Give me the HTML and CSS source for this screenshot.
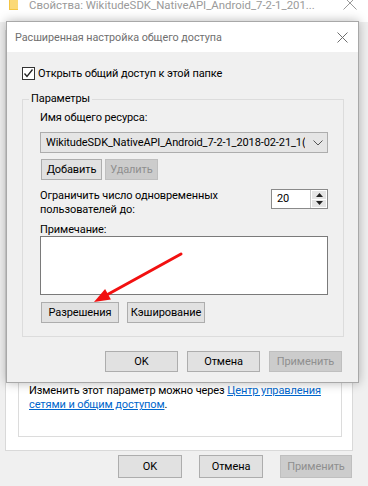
FILE: index.html
```html
<!DOCTYPE html>
<html lang="ru">
<head>
<meta charset="utf-8">
<title>Расширенная настройка общего доступа</title>
<link rel="stylesheet" href="styles.css">
</head>
<body>
<div class="win">
  <div class="wtitle">
    <svg class="folder" width="9" height="12" viewBox="0 0 9 12"><rect x="0" y="0" width="9" height="11" fill="#f5c542"/><rect x="1" y="0" width="8" height="10" fill="#fbd977"/></svg>
    <span class="wtitle-text">Свойства: WikitudeSDK_NativeAPI_Android_7-2-1_201...</span>
    <svg class="wclose" width="14" height="14" viewBox="0 0 14 14"><path d="M0.5 0.5L13.5 13.5M13.5 0.5L0.5 13.5" stroke="#9a9a9a" stroke-width="1" fill="none"/></svg>
  </div>
  <div class="tabpage">
    <div class="infobox">
      <p class="info">Изменить этот параметр можно через <a href="#">Центр управления<br>сетями и общим доступом</a>.</p>
    </div>
  </div>
  <div class="wbuttons">
    <button class="btn pbtn">OK</button>
    <button class="btn pbtn">Отмена</button>
    <button class="btn pbtn wide" disabled>Применить</button>
  </div>

  <div class="dialog">
    <div class="dtitle">
      <span class="dtitle-text">Расширенная настройка общего доступа</span>
      <svg class="dclose" width="11" height="11" viewBox="0 0 11 11"><path d="M0.5 0.5L10.5 10.5M10.5 0.5L0.5 10.5" stroke="#6e6e6e" stroke-width="1" fill="none"/></svg>
    </div>
    <div class="dbody">
      <label class="check">
        <span class="box"><svg width="11" height="11" viewBox="0 0 11 11"><path d="M1.5 5.5L4 8.5L9.5 1.5" stroke="#222" stroke-width="1.3" fill="none"/></svg></span>
        <span>Открыть общий доступ к этой папке</span>
      </label>
      <fieldset class="group">
        <legend>Параметры</legend>
        <div class="lbl first">Имя общего ресурса:</div>
        <div class="combo">
          <span class="combo-text">WikitudeSDK_NativeAPI_Android_7-2-1_2018-02-21_1(</span>
          <svg class="chev" width="10" height="6" viewBox="0 0 10 6"><path d="M0.5 0.5L5 5L9.5 0.5" stroke="#555" stroke-width="1" fill="none"/></svg>
        </div>
        <div class="btnrow r1">
          <button class="btn b-add">Добавить</button>
          <button class="btn b-del" disabled>Удалить</button>
        </div>
        <div class="limit">
          <div class="limit-text">Ограничить число одновременных<br>пользователей до:</div>
          <div class="spin">
            <span class="spin-val">20</span>
            <span class="spin-btns">
              <span class="sb"><svg width="7" height="4" viewBox="0 0 7 4"><path d="M3.5 0L7 4H0Z" fill="#222"/></svg></span>
              <span class="sb"><svg width="7" height="4" viewBox="0 0 7 4"><path d="M0 0H7L3.5 4Z" fill="#222"/></svg></span>
            </span>
          </div>
        </div>
        <div class="lbl note">Примечание:</div>
        <div class="textarea"></div>
        <div class="btnrow r2">
          <button class="btn b-perm">Разрешения</button>
          <button class="btn b-cache">Кэширование</button>
        </div>
      </fieldset>
      <div class="dbuttons">
        <button class="btn dbtn">OK</button>
        <button class="btn dbtn">Отмена</button>
        <button class="btn dbtn" disabled>Применить</button>
      </div>
    </div>
  </div>

  <svg class="arrow" width="100" height="60" viewBox="0 0 100 60">
    <path d="M93 6L20 46.3" stroke="#f21010" stroke-width="3" stroke-linecap="round" fill="none"/>
    <path d="M6 54L22.9 51.5L17.1 41Z" fill="#f21010"/>
  </svg>
</div>
</body>
</html>
```
FILE: styles.css
```css
* { box-sizing: border-box; }
html, body { margin: 0; padding: 0; }
body {
  width: 368px;
  height: 486px;
  overflow: hidden;
  background: #f0f0f0;
  font-family: Roboto, "Liberation Sans", sans-serif;
  font-size: 11px;
  letter-spacing: -0.1px;
  color: #000;
}
.win {
  position: relative;
  width: 368px;
  height: 486px;
  display: flex;
  flex-direction: column;
  background: #f0f0f0;
  overflow: hidden;
}
.wtitle {
  height: 22px;
  background: #fff;
  display: flex;
  align-items: flex-start;
  padding-left: 9px;
  padding-right: 11px;
}
.folder { margin-top: -1px; flex: none; }
.wtitle-text {
  margin-left: 11px;
  margin-top: -2px;
  line-height: 14px;
  font-size: 11.4px;
  letter-spacing: 0;
  color: #9a9a9a;
  white-space: nowrap;
  overflow: hidden;
  flex: 1;
}
.wclose { margin-top: -4px; flex: none; }

.tabpage {
  margin-top: 8px;
  margin-left: 5px;
  width: 348px;
  height: 421px;
  background: #fff;
  border: 1px solid #d9d9d9;
  padding: 0 10px 13px 12px;
  display: flex;
  flex-direction: column;
}
.infobox {
  flex: 1;
  border: 1px solid #dcdcdc;
  border-top: none;
  display: flex;
  flex-direction: column;
  justify-content: flex-end;
  padding: 0 0 24px 10px;
}
.info { margin: 0; line-height: 14px; white-space: nowrap; }
.info a { color: #0066cc; text-decoration: underline; }

.wbuttons {
  margin-top: 4px;
  display: flex;
  justify-content: flex-end;
  gap: 17px;
  padding-right: 16px;
}
.btn {
  font-family: inherit;
  font-size: 11px;
  letter-spacing: -0.1px;
  color: #000;
  background: #e1e1e1;
  border: 1px solid #adadad;
  padding: 0;
  margin: 0;
  height: 21px;
  line-height: 19px;
}
.btn:disabled {
  background: #cccccc;
  border-color: #bfbfbf;
  color: #8f8f8f;
}
.pbtn { width: 64px; height: 23px; }
.pbtn.wide { width: 72px; }

.dialog {
  position: absolute;
  left: 6px;
  top: 21px;
  width: 353px;
  height: 362px;
  border: 1px solid #a8a8a8;
  box-shadow: 0 0 10px rgba(0,0,0,0.28);
  display: flex;
  flex-direction: column;
  background: #f0f0f0;
}
.dtitle {
  height: 30px;
  flex: none;
  background: #fff;
  display: flex;
  align-items: center;
  padding: 0 10px 0 8px;
}
.dtitle-text {
  flex: 1;
  font-size: 10.8px;
  letter-spacing: -0.05px;
  color: #6f6f6f;
  white-space: nowrap;
}
.dclose { flex: none; }
.dbody {
  flex: 1;
  padding: 15px 15px 0 15px;
  display: flex;
  flex-direction: column;
}
.check {
  display: flex;
  align-items: center;
  height: 13px;
  gap: 3px;
}
.box {
  width: 13px;
  height: 13px;
  border: 1px solid #333;
  background: #fff;
  display: flex;
  align-items: center;
  justify-content: center;
}
.box svg { display: block; }

.group {
  margin: 12px 0 0 0;
  width: 322px;
  border: 1px solid #dcdcdc;
  padding: 0 15px 13px 17px;
  min-width: 0;
}
.group legend {
  padding: 0 2px;
  line-height: 14px;
  margin-left: -11px;
}
.lbl { line-height: 14px; }
.lbl.first { margin-top: 5px; }
.combo {
  margin-top: 7px;
  width: 288px;
  height: 21px;
  background: #e5e5e5;
  border: 1px solid #adadad;
  display: flex;
  align-items: center;
  padding: 0 4px 0 5px;
}
.combo-text {
  width: 262px;
  overflow: hidden;
  white-space: nowrap;
}
.chev { margin-left: 8px; flex: none; }
.btnrow { display: flex; gap: 3px; }
.r1 { margin-top: 6px; margin-left: 1px; }
.b-add { width: 61px; }
.b-del { width: 53px; color: #a3a3a3; }
.limit {
  margin-top: 9px;
  display: flex;
  justify-content: space-between;
  align-items: flex-start;
}
.limit-text { line-height: 14px; }
.spin {
  width: 57px;
  height: 20px;
  border: 1px solid #8a8a8a;
  background: #fff;
  display: flex;
  align-items: stretch;
}
.spin-val { flex: 1; padding-left: 5px; line-height: 18px; }
.spin-btns {
  width: 17px;
  display: flex;
  flex-direction: column;
  border-left: 1px solid #c8c8c8;
  padding: 1px;
  gap: 1px;
}
.sb {
  flex: 1;
  background: #e5e5e5;
  display: flex;
  align-items: center;
  justify-content: center;
}
.sb svg { display: block; }
.note { margin-top: 7px; line-height: 12px; }
.textarea {
  height: 59px;
  width: 288px;
  background: #fff;
  border: 1px solid #7a7a7a;
}
.r2 { margin-top: 7px; margin-left: 1px; gap: 8px; }
.b-perm, .b-cache { width: 78px; }
.dbuttons {
  margin-top: 14px;
  display: flex;
  justify-content: flex-end;
  gap: 9px;
  margin-right: 1px;
}
.dbtn { width: 73px; }

.arrow {
  position: absolute;
  left: 88px;
  top: 248px;
}
```
